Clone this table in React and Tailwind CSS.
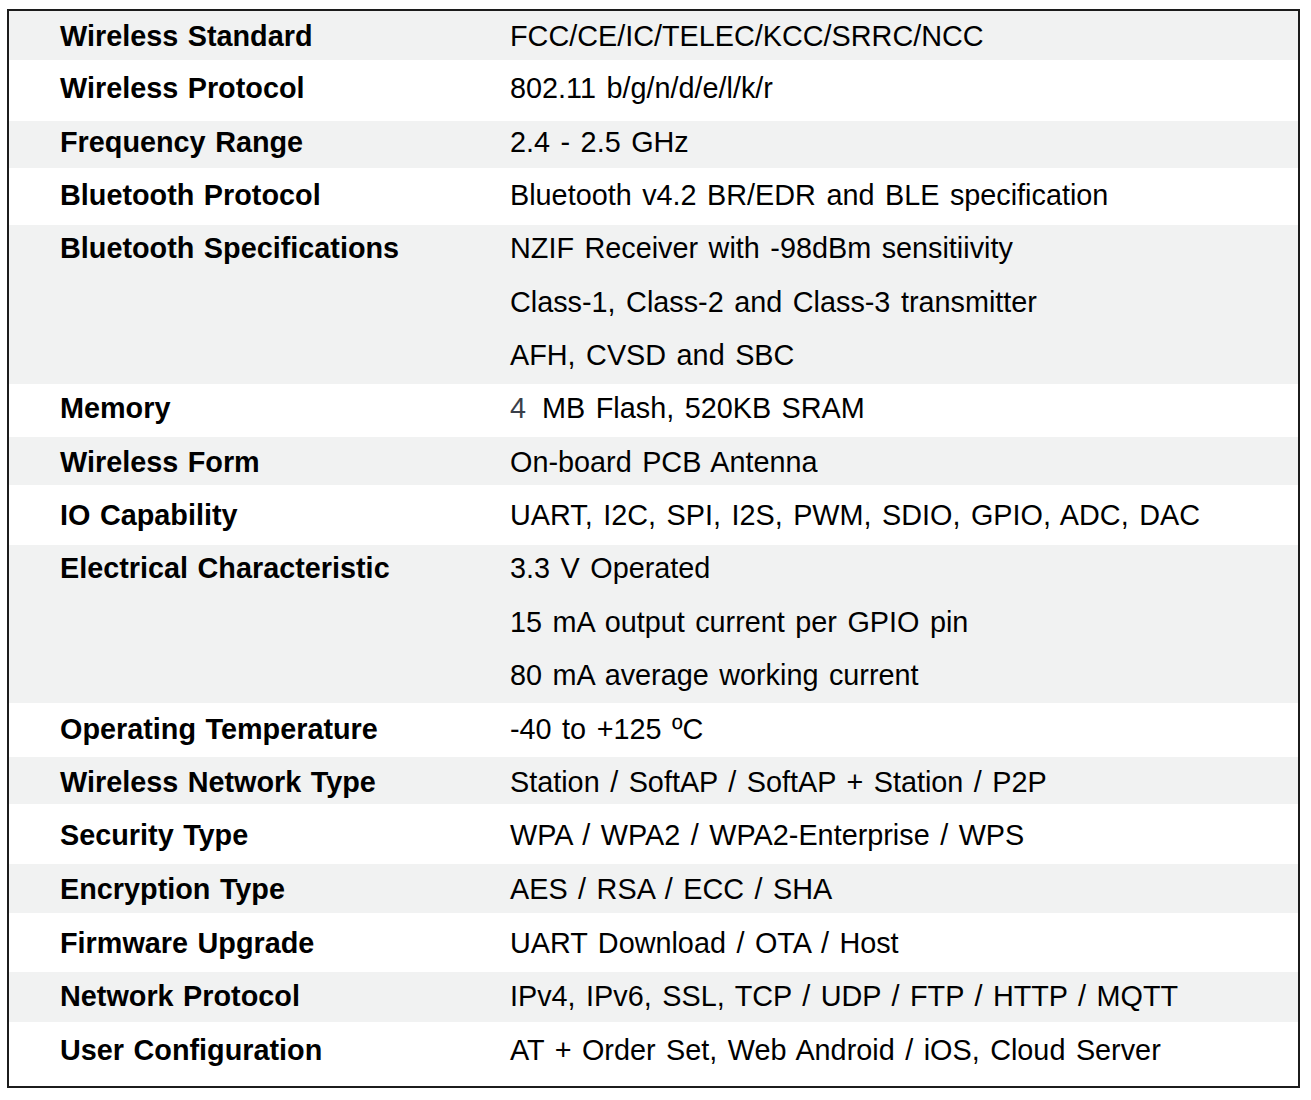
import React from "react";

const rows = [
  { label: "Wireless Standard", values: ["FCC/CE/IC/TELEC/KCC/SRRC/NCC"], h: "h-[49px]" },
  { label: "Wireless Protocol", values: ["802.11 b/g/n/d/e/l/k/r"], h: "h-[61px] pb-[5px]" },
  { label: "Frequency Range", values: ["2.4 - 2.5 GHz"], h: "h-[47px] pb-[5px]" },
  { label: "Bluetooth Protocol", values: ["Bluetooth v4.2 BR/EDR and BLE specification"], h: "h-[57px] pb-[3px]" },
  {
    label: "Bluetooth Specifications",
    values: [
      "NZIF Receiver with -98dBm sensitiivity",
      "Class-1, Class-2 and Class-3 transmitter",
      "AFH, CVSD and SBC",
    ],
    h: "h-[159px]",
  },
  { label: "Memory", values: ["memory"], h: "h-[53px] pb-[5px]" },
  { label: "Wireless Form", values: ["On-board PCB Antenna"], h: "h-[48px] pt-[2px]" },
  { label: "IO Capability", values: ["UART, I2C, SPI, I2S, PWM, SDIO, GPIO, ADC, DAC"], h: "h-[60px]" },
  {
    label: "Electrical Characteristic",
    values: [
      "3.3 V Operated",
      "15 mA output current per GPIO pin",
      "80 mA average working current",
    ],
    h: "h-[158px]",
  },
  { label: "Operating Temperature", values: ["-40 to +125 ºC"], h: "h-[54px] pb-[3px]" },
  { label: "Wireless Network Type", values: ["Station / SoftAP / SoftAP + Station / P2P"], h: "h-[47px] pt-[2px]" },
  { label: "Security Type", values: ["WPA / WPA2 / WPA2-Enterprise / WPS"], h: "h-[60px] pt-[2px]" },
  { label: "Encryption Type", values: ["AES / RSA / ECC / SHA"], h: "h-[49px]" },
  { label: "Firmware Upgrade", values: ["UART Download / OTA / Host"], h: "h-[59px]" },
  { label: "Network Protocol", values: ["IPv4, IPv6, SSL, TCP / UDP / FTP / HTTP / MQTT"], h: "h-[50px] pb-[3px]" },
  { label: "User Configuration", values: ["AT + Order Set, Web Android / iOS, Cloud Server"], h: "h-[64px] pb-[9px]" },
];

const Value = ({ text }) => {
  if (text === "memory") {
    return (
      <span className="whitespace-pre">
        <span className="text-[#3a3f4a]">4</span>
        <span className="[word-spacing:0px]">  </span>MB Flash, 520KB SRAM
      </span>
    );
  }
  return <span className="whitespace-pre">{text}</span>;
};

const SpecRow = ({ row, index }) => {
  const multi = row.values.length > 1;
  const bg = index % 2 === 0 ? "bg-[#f1f2f2]" : "bg-white";
  return (
    <div className={`flex ${row.h} ${bg} ${multi ? "items-start" : "items-center"}`}>
      <div className="w-[501px] shrink-0 pl-[51px] font-bold leading-[46px] [word-spacing:1.5px]">
        {row.label}
      </div>
      <div className="flex flex-col gap-[7.5px] leading-[46px] [word-spacing:2.5px]">
        {row.values.map((v) => (
          <Value key={v} text={v} />
        ))}
      </div>
    </div>
  );
};

const App = () => {
  return (
    <div className="min-h-[1100px] bg-white pt-[9px] pl-[7px]">
      {/* spec table */}
      <div
        className="w-[1293px] border-2 border-[#1c1c1c] text-[28.8px] text-black"
        style={{ fontFamily: '"Liberation Sans", Arial, sans-serif' }}
      >
        {rows.map((row, i) => (
          <SpecRow key={row.label} row={row} index={i} />
        ))}
      </div>
    </div>
  );
};

export default App;
